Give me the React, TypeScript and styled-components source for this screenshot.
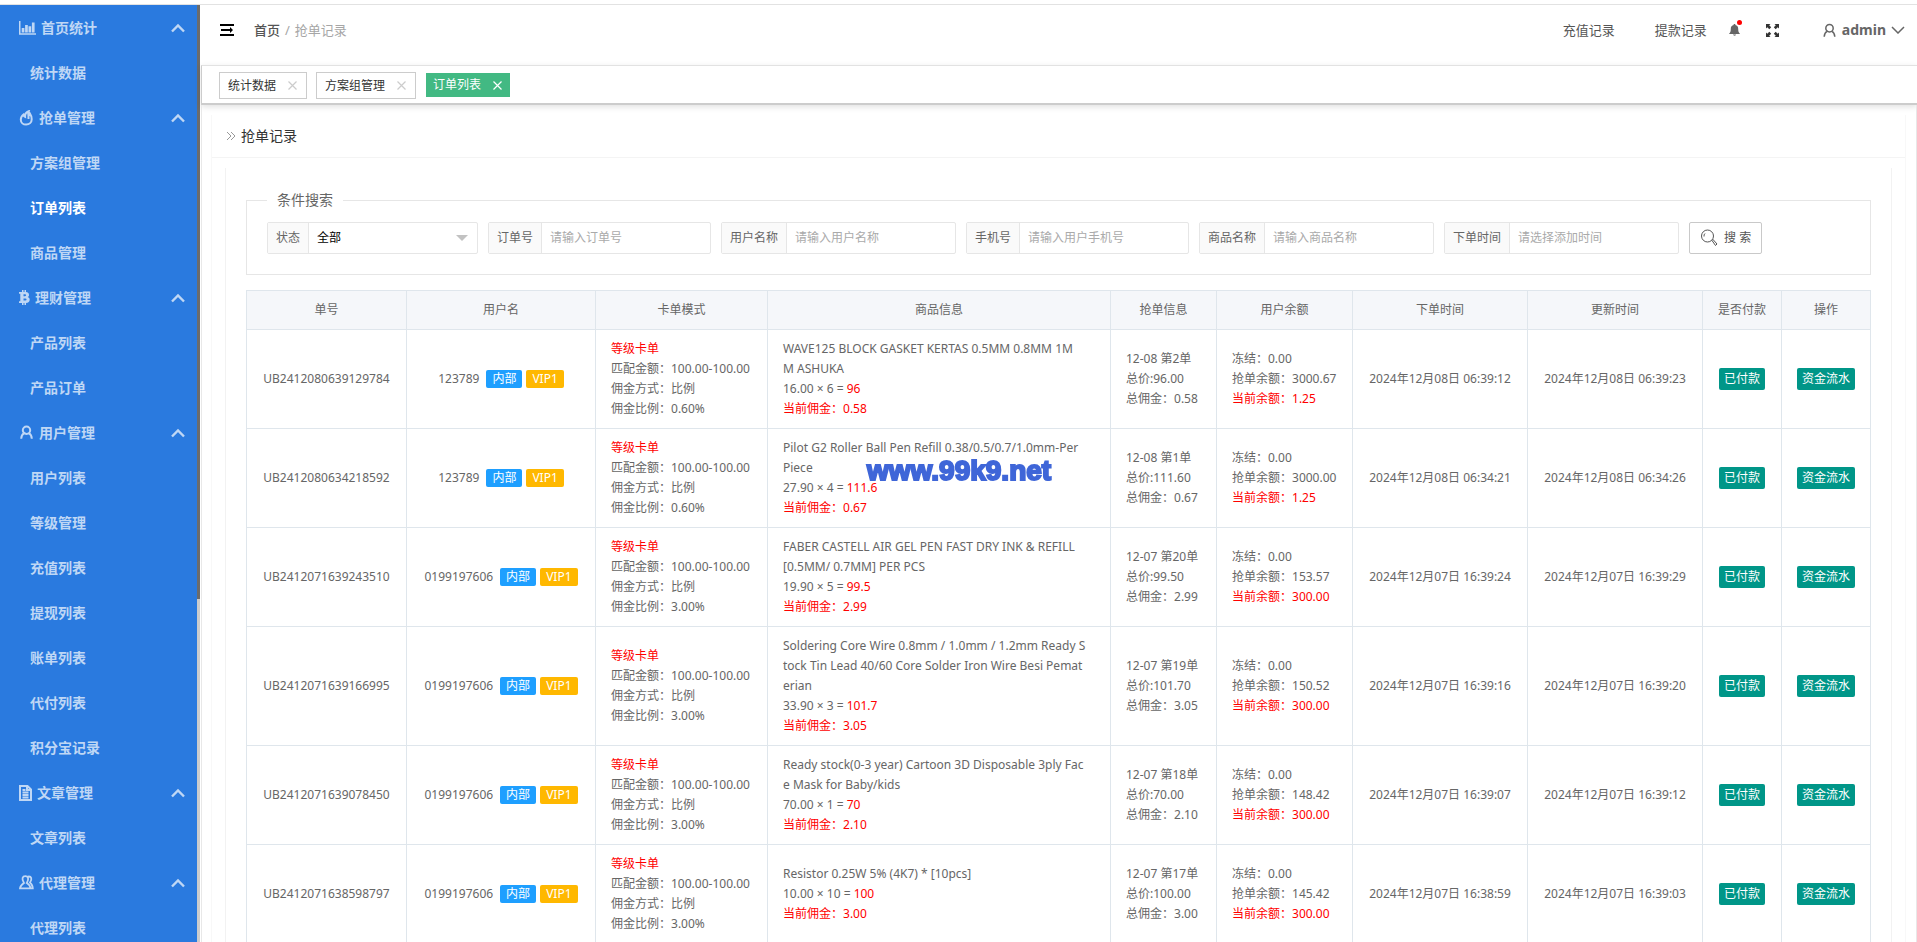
import React from 'react';
import styled, { createGlobalStyle, css } from 'styled-components';

const Global = createGlobalStyle`
  *, *::before, *::after { box-sizing: border-box; }
  html, body, #root { height: 100%; }
  body {
    margin: 0;
    background: #fff;
    color: #666;
    font: 12px/20px "Noto Sans", "Noto Sans CJK SC", sans-serif;
    overflow: hidden;
  }
  button, input, select { font: inherit; color: inherit; }
  a { color: inherit; text-decoration: none; }
`;

const Shell = styled.div`
  display: flex;
  height: 100%;
  padding-top: 4px;
`;

const Sidebar = styled.aside`
  display: flex;
  flex: 0 0 200px;
  border-top: 1px solid #e2e2e2;
  overflow: hidden;
`;

const Menu = styled.nav`
  flex: 1;
  background: #2a7adf;
  color: #bfd7f5;
  font-size: 14px;
  font-weight: 700;
`;

const Track = styled.div`
  flex: 0 0 3px;
  background: #ccc;
`;

const Thumb = styled.div`
  height: 594px;
  max-height: 64%;
  background: #6b6b6b;
`;

const MenuHead = styled.button`
  display: flex;
  align-items: center;
  width: 100%;
  height: 45px;
  padding: 0 12px 0 19px;
  border: 0;
  background: none;
  text-align: left;
  svg { flex: none; margin-right: 5px; }
  svg:last-child { margin: 0 0 0 auto; }
`;

const MenuLink = styled.a<{ $active?: boolean }>`
  display: flex;
  align-items: center;
  height: 45px;
  padding-left: 30px;
  color: ${p => (p.$active ? '#fff' : 'inherit')};
`;

const Main = styled.div`
  flex: 1;
  display: flex;
  flex-direction: column;
  min-width: 0;
  border-top: 1px solid #e2e2e2;
`;

const Header = styled.header`
  display: flex;
  align-items: center;
  justify-content: space-between;
  flex: 0 0 60px;
  padding: 0 12px 10px 20px;
  font-size: 13px;
`;

const HeaderSide = styled.div`
  display: flex;
  align-items: center;
`;

const IconButton = styled.button`
  display: flex;
  position: relative;
  padding: 0;
  border: 0;
  background: none;
`;

const Crumbs = styled.nav`
  display: flex;
  gap: 5px;
  margin-left: 20px;
  color: #a6a6a6;
  a { color: #555; font-weight: 500; }
`;

const HeaderLink = styled.a`
  margin-right: 40px;
  color: #555;
  &:nth-of-type(2) { margin-right: 22px; }
`;

const Dot = styled.span`
  position: absolute;
  top: -4px;
  right: -2px;
  width: 5px;
  height: 5px;
  border-radius: 50%;
  background: #f00;
`;

const Account = styled.button`
  display: flex;
  align-items: center;
  gap: 5px;
  margin-left: 43px;
  padding: 0;
  border: 0;
  background: none;
  font-size: 14px;
  font-weight: 700;
`;

const TabBar = styled.div`
  display: flex;
  align-items: flex-start;
  flex: 0 0 40px;
  margin-left: 1px;
  padding: 6px 17px 4px;
  border: 1px solid #ccc;
  border-width: 1px 0 2px 1px;
  border-top-color: #e2e2e2;
  box-shadow: 0 2px 6px rgba(0, 0, 0, 0.12);
`;

const Tab = styled.div<{ $active?: boolean }>`
  display: flex;
  align-items: center;
  gap: 12px;
  height: 27px;
  margin-right: 9px;
  padding: 0 9px 0 8px;
  border: 1px solid #ccc;
  color: #333;
  button { color: #ccc; }
  ${p => p.$active && css`
    height: 24px;
    margin: 1px 0 0 1px;
    padding: 0 8px 0 7px;
    border: 0;
    background: #42b983;
    color: #fff;
    button { color: #fff; }
  `}
`;

const Content = styled.main`
  flex: 1;
  min-height: 0;
  margin-left: 1px;
  padding: 10px 10px 0 9px;
  border: 1px solid #e8e8e8;
  border-width: 0 1px 0 1px;
  overflow: hidden;
`;

const Panel = styled.section`
  height: 100%;
  border: 1px solid #f8f8f8;
  border-width: 0 1px;
`;

const PanelTitle = styled.h1`
  display: flex;
  align-items: center;
  gap: 5px;
  height: 43px;
  margin: 0;
  padding-left: 14px;
  border-bottom: 1px solid #f4f4f4;
  color: #333;
  font-size: 14px;
  font-weight: 400;
  svg { color: #999; }
`;

const Card = styled.div`
  height: 100%;
  margin: 10px 13px 0;
  padding: 22px 20px 0;
  border: 1px solid #f2f2f2;
  border-width: 0 1px;
`;

const Search = styled.fieldset`
  margin: 0 0 15px;
  padding: 12px 20px 20px;
  border: 1px solid #e6e6e6;
  legend {
    padding: 0 10px;
    font-size: 14px;
    line-height: 20px;
  }
`;

const Form = styled.form`
  display: flex;
  flex-wrap: wrap;
  gap: 10px;
`;

const Field = styled.label`
  display: flex;
  position: relative;
  height: 32px;
  border: 1px solid #e6e6e6;
  border-radius: 2px;
  > span {
    padding: 0 8px;
    border-right: 1px solid #e6e6e6;
    background: #fafafa;
    line-height: 30px;
  }
  input, select {
    width: 168px;
    padding: 0 8px;
    border: 0;
    outline: 0;
    background: none;
    appearance: none;
  }
  select { color: #000; }
  input::placeholder { color: #aaa; opacity: 1; }
  svg { position: absolute; right: 9px; top: 12px; pointer-events: none; }
`;

const SearchButton = styled.button`
  display: flex;
  align-items: center;
  gap: 6px;
  height: 32px;
  padding: 0 10px;
  border: 1px solid #c9c9c9;
  border-radius: 2px;
  background: #fff;
  color: #555;
  white-space: pre;
`;

const Table = styled.table`
  width: 100%;
  border-collapse: collapse;
  table-layout: fixed;
  th, td {
    padding: 9px 12px 9px 15px;
    border: 1px solid #dfe6ec;
    text-align: left;
    word-break: break-all;
  }
  th {
    padding: 9px 0;
    background: #f5f7fa;
    font-weight: 400;
    text-align: center;
  }
`;

const CenterCell = styled.td`
  && { padding: 9px 0; text-align: center; }
`;

const UserLine = styled.div`
  display: flex;
  align-items: center;
  justify-content: center;
`;

const Tag = styled.span<{ $color: string; $gap: number }>`
  height: 18px;
  margin-left: ${p => p.$gap}px;
  padding: 0 6px;
  border-radius: 2px;
  background: ${p => p.$color};
  color: #fff;
  line-height: 18px;
`;

const Action = styled.button`
  height: 22px;
  padding: 0 5px;
  border: 0;
  border-radius: 2px;
  background: #009688;
  && { color: #fff; }
  line-height: 22px;
  vertical-align: middle;
`;

const Line = styled.div<{ $red?: boolean }>`
  color: ${p => (p.$red ? '#f00' : 'inherit')};
  white-space: pre-line;
  em { color: #f00; font-style: normal; }
`;

const Watermark = styled.div`
  position: fixed;
  left: 867px;
  top: 452px;
  color: #3f66d8;
  font: 700 28px/38px "Liberation Sans Narrow", "Liberation Sans", sans-serif;
  -webkit-text-stroke: 2px #3f66d8;
  pointer-events: none;
`;

const FullIcon = styled.svg`
  margin-left: 26px;
`;

const Stroke = ({ d, w, h, sw = 1.4 }: { d: string; w: number; h: number; sw?: number }) => (
  <svg width={w} height={h} viewBox={`0 0 ${w} ${h}`} fill="none" stroke="currentColor" strokeWidth={sw} aria-hidden="true">
    <path d={d} />
  </svg>
);

const Up = () => <Stroke w={14} h={10} sw={2.4} d="M1 8.500 7 2.500l6 6" />;
const Close = () => <Stroke w={9} h={9} sw={1.2} d="M.5.5l8 8M8.500.5l-8 8" />;
const Person = ({ sw = 2 }: { sw?: number }) => (
  <Stroke w={15} h={15} sw={sw} d="M7.500 1.500a3.700 3.700 0 1 0 0 7.400 3.700 3.700 0 0 0 0-7.400ZM5.300 8.200C3.300 9.300 2.300 11.200 2.200 13.800M9.700 8.200c2 1.100 3 3 3.100 5.600" />
);
const Chart = () => (
  <svg width="17" height="14" viewBox="0 0 17 14" fill="currentColor" aria-hidden="true">
    <path d="M0 0h1.500v12.300H17V13.800H0zM2.700 7h2.700v4.500H2.700zM6.100 4h2.700v7.500H6.100zM9.500 5.200h2.700v6.300H9.500zM12.900 1.500h2.700v10h-2.700z" />
  </svg>
);
const Fire = () => (
  <Stroke w={15} h={16} sw={2} d="M4.500 4.500C2.500 6 1.800 7.800 1.800 9.700c0 3 2.400 4.900 5.300 4.900 3.200 0 5.600-2.200 5.600-5.400 0-2.200-.8-4.200-1.900-5.800-.2 1.300-.7 2-1.300 2.500C9.300 4 9 2.500 9.600 1.200 7.300 2 5.900 4 6.100 6.900 5.200 6.500 4.700 5.700 4.500 4.500ZM9.500 6v3" />
);
const Bitcoin = () => (
  <svg width="11" height="15" viewBox="0 0 11 15" aria-hidden="true">
    <path fill="currentColor" fillRule="evenodd" d="M0 2h3V0h1.500v2h1V0H7v2.100C9 2.300 10 3.400 10 4.900c0 1-.5 1.800-1.400 2.200 1.400.4 2.100 1.400 2.100 2.700 0 1.900-1.300 3-3.700 3.200v2H5.500v-2h-1v2H3v-2H0v-1.800h1.300V3.800H0zM4.500 4.300v1.900H6c1.500 0 1.500-1.900 0-1.900zM4.500 8.400v2.200h1.800c1.700 0 1.700-2.200 0-2.200z" />
  </svg>
);
const Doc = () => <Stroke w={13} h={16} sw={2} d="M1 1h7.500L12 4.500V15H1zM8 1v4h4M3.500 7.500h6M3.500 10h6M3.500 12.500h6M3.500 5h3" />;
const Agents = () => (
  <Stroke w={15} h={15} sw={1.8} d="M5 8C2.200 3.800 3.600 1.200 6.300 1.200S10.400 3.800 7.800 8c2 1.200 3.400 2.800 3.600 5.300H1C1.200 10.800 3 9.500 5 8ZM9 1.600c3.500-.6 4.400 2.400 2 6 1.600 1.200 2.700 2.600 2.800 5.700h-2.400" />
);

const menu: { icon: React.ReactNode; title: string; items: string[] }[] = [
  { icon: <Chart />, title: '首页统计', items: ['统计数据'] },
  { icon: <Fire />, title: '抢单管理', items: ['方案组管理', '订单列表', '商品管理'] },
  { icon: <Bitcoin />, title: '理财管理', items: ['产品列表', '产品订单'] },
  { icon: <Person />, title: '用户管理', items: ['用户列表', '等级管理', '充值列表', '提现列表', '账单列表', '代付列表', '积分宝记录'] },
  { icon: <Doc />, title: '文章管理', items: ['文章列表'] },
  { icon: <Agents />, title: '代理管理', items: ['代理列表'] },
];

const tabs = ['统计数据', '方案组管理', '订单列表'];

const fields = [
  ['订单号', '请输入订单号'],
  ['用户名称', '请输入用户名称'],
  ['手机号', '请输入用户手机号'],
  ['商品名称', '请输入商品名称'],
  ['下单时间', '请选择添加时间'],
];

const columns: [string, number | undefined][] = [
  ['单号', 160], ['用户名', 189], ['卡单模式', 172], ['商品信息', undefined], ['抢单信息', 106],
  ['用户余额', 136], ['下单时间', 175], ['更新时间', 175], ['是否付款', 79], ['操作', 89],
];

type Order = {
  id: string; user: string; rate: string; goods: string; sum: string; total: string; fee: string;
  seq: string; price: string; balance: string; now: string; made: string; updated: string;
};

const orders: Order[] = [
  { id: 'UB2412080639129784', user: '123789', rate: '0.60%', goods: 'WAVE125 BLOCK GASKET KERTAS 0.5MM 0.8MM 1M\nM ASHUKA', sum: '16.00 × 6', total: '96', fee: '0.58', seq: '12-08 第2单', price: '96.00', balance: '3000.67', now: '1.25', made: '2024年12月08日 06:39:12', updated: '2024年12月08日 06:39:23' },
  { id: 'UB2412080634218592', user: '123789', rate: '0.60%', goods: 'Pilot G2 Roller Ball Pen Refill 0.38/0.5/0.7/1.0mm-Per\nPiece', sum: '27.90 × 4', total: '111.6', fee: '0.67', seq: '12-08 第1单', price: '111.60', balance: '3000.00', now: '1.25', made: '2024年12月08日 06:34:21', updated: '2024年12月08日 06:34:26' },
  { id: 'UB2412071639243510', user: '0199197606', rate: '3.00%', goods: 'FABER CASTELL AIR GEL PEN FAST DRY INK & REFILL\n[0.5MM/ 0.7MM] PER PCS', sum: '19.90 × 5', total: '99.5', fee: '2.99', seq: '12-07 第20单', price: '99.50', balance: '153.57', now: '300.00', made: '2024年12月07日 16:39:24', updated: '2024年12月07日 16:39:29' },
  { id: 'UB2412071639166995', user: '0199197606', rate: '3.00%', goods: 'Soldering Core Wire 0.8mm / 1.0mm / 1.2mm Ready S\ntock Tin Lead 40/60 Core Solder Iron Wire Besi Pemat\nerian', sum: '33.90 × 3', total: '101.7', fee: '3.05', seq: '12-07 第19单', price: '101.70', balance: '150.52', now: '300.00', made: '2024年12月07日 16:39:16', updated: '2024年12月07日 16:39:20' },
  { id: 'UB2412071639078450', user: '0199197606', rate: '3.00%', goods: 'Ready stock(0-3 year) Cartoon 3D Disposable 3ply Fac\ne Mask for Baby/kids', sum: '70.00 × 1', total: '70', fee: '2.10', seq: '12-07 第18单', price: '70.00', balance: '148.42', now: '300.00', made: '2024年12月07日 16:39:07', updated: '2024年12月07日 16:39:12' },
  { id: 'UB2412071638598797', user: '0199197606', rate: '3.00%', goods: 'Resistor 0.25W 5% (4K7) * [10pcs]', sum: '10.00 × 10', total: '100', fee: '3.00', seq: '12-07 第17单', price: '100.00', balance: '145.42', now: '300.00', made: '2024年12月07日 16:38:59', updated: '2024年12月07日 16:39:03' },
];

const OrderRow = ({ o }: { o: Order }) => (
  <tr>
    <CenterCell>{o.id}</CenterCell>
    <CenterCell>
      <UserLine>
        {o.user}
        <Tag $color="#1e9fff" $gap={7}>内部</Tag>
        <Tag $color="#ffb800" $gap={4}>VIP1</Tag>
      </UserLine>
    </CenterCell>
    <td>
      <Line $red>等级卡单</Line>
      <Line>匹配金额：100.00-100.00</Line>
      <Line>佣金方式：比例</Line>
      <Line>佣金比例：{o.rate}</Line>
    </td>
    <td>
      <Line>{o.goods}</Line>
      <Line>{o.sum} = <em>{o.total}</em></Line>
      <Line $red>当前佣金：{o.fee}</Line>
    </td>
    <td>
      <Line>{o.seq}</Line>
      <Line>总价:{o.price}</Line>
      <Line>总佣金：{o.fee}</Line>
    </td>
    <td>
      <Line>冻结：0.00</Line>
      <Line>抢单余额：{o.balance}</Line>
      <Line $red>当前余额：{o.now}</Line>
    </td>
    <CenterCell>{o.made}</CenterCell>
    <CenterCell>{o.updated}</CenterCell>
    <CenterCell><Action type="button">已付款</Action></CenterCell>
    <CenterCell><Action type="button">资金流水</Action></CenterCell>
  </tr>
);

export default function App() {
  return (
    <>
      <Global />
      <Shell>
        <Sidebar>
          <Menu>
            {menu.map(g => (
              <React.Fragment key={g.title}>
                <MenuHead type="button">{g.icon}{g.title}<Up /></MenuHead>
                {g.items.map(i => (
                  <MenuLink key={i} href="#" $active={i === '订单列表'}>{i}</MenuLink>
                ))}
              </React.Fragment>
            ))}
          </Menu>
          <Track><Thumb /></Track>
        </Sidebar>
        <Main>
          <Header>
            <HeaderSide>
              <IconButton type="button" aria-label="收起菜单">
                <svg width="14" height="12" viewBox="0 0 14 12" fill="#000" aria-hidden="true">
                  <path d="M0 0h14v2H0zM1 5h9V3l3 3-3 3V7H1zM0 10h14v2H0z" />
                </svg>
              </IconButton>
              <Crumbs><a href="#">首页</a><span>/</span><span>抢单记录</span></Crumbs>
            </HeaderSide>
            <HeaderSide>
              <HeaderLink href="#">充值记录</HeaderLink>
              <HeaderLink href="#">提款记录</HeaderLink>
              <IconButton type="button" aria-label="通知">
                <svg width="11" height="12" viewBox="0 0 11 12" fill="#666" aria-hidden="true">
                  <path d="M4.700 0h1.600v1C8.200 1.400 9.200 2.800 9.200 4.700 9.200 7.500 9.600 8.500 10.800 9.400V10H.2v-.6C1.400 8.500 1.800 7.500 1.800 4.700 1.800 2.800 2.800 1.400 4.700 1zM4 10.600h3c-.3 1.600-2.700 1.600-3 0z" />
                </svg>
                <Dot />
              </IconButton>
              <IconButton type="button" aria-label="全屏">
                <FullIcon width="13" height="13" viewBox="0 0 13 13" fill="#333" aria-hidden="true">
                  <path d="M0 0h4.500L3.200 1.300 5.200 3.300 3.300 5.200 1.300 3.200 0 4.500zM13 0v4.500l-1.300-1.300-2 2-1.900-1.900 2-2L8.500 0zM0 13V8.500l1.300 1.300 2-2 1.900 1.900-2 2L4.500 13zM13 13H8.500l1.300-1.300-2-2 1.900-1.900 2 2L13 8.500z" />
                </FullIcon>
              </IconButton>
              <Account type="button">
                <Person sw={1.5} />
                admin
                <Stroke w={14} h={8} sw={1.5} d="M1 1l6 6 6-6" />
              </Account>
            </HeaderSide>
          </Header>
          <TabBar>
            {tabs.map((t, i) => (
              <Tab key={t} $active={i === 2}>
                {t}
                <IconButton type="button" aria-label={'关闭' + t}><Close /></IconButton>
              </Tab>
            ))}
          </TabBar>
          <Content>
            <Panel>
              <PanelTitle>
                <Stroke w={10} h={10} sw={1} d="M1 1l4 4-4 4M5 1l4 4-4 4" />
                抢单记录
              </PanelTitle>
              <Card>
                <Search>
                  <legend>条件搜索</legend>
                  <Form onSubmit={e => e.preventDefault()}>
                    <Field>
                      <span>状态</span>
                      <select defaultValue="all"><option value="all">全部</option></select>
                      <svg width="12" height="6" viewBox="0 0 12 6" fill="#c2c2c2" aria-hidden="true"><path d="M0 0h12L6 6z" /></svg>
                    </Field>
                    {fields.map(([label, hint]) => (
                      <Field key={label}>
                        <span>{label}</span>
                        <input type="text" placeholder={hint} />
                      </Field>
                    ))}
                    <SearchButton type="submit">
                      <Stroke w={18} h={18} sw={1} d="M7.500 1a6 6 0 1 0 0 12 6 6 0 0 0 0-12ZM4 7.500A3.500 3.500 0 0 1 5 4.500M12 11.500l1-1 4 4.500-1.500 1.500z" />
                      搜 索
                    </SearchButton>
                  </Form>
                </Search>
                <Table>
                  <colgroup>{columns.map(([name, width]) => <col key={name} width={width} />)}</colgroup>
                  <thead><tr>{columns.map(([name]) => <th key={name} scope="col">{name}</th>)}</tr></thead>
                  <tbody>{orders.map(o => <OrderRow key={o.id} o={o} />)}</tbody>
                </Table>
              </Card>
            </Panel>
          </Content>
        </Main>
      </Shell>
      <Watermark>www.99k9.net</Watermark>
    </>
  );
}
